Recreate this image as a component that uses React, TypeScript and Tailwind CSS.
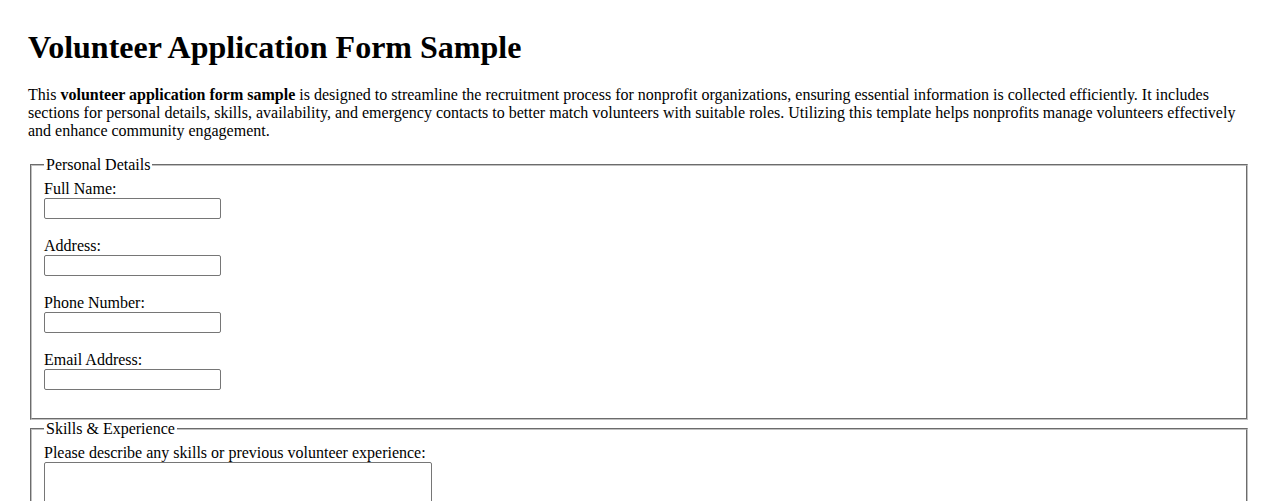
export default function App() {
  const fields = ["Full Name:", "Address:", "Phone Number:", "Email Address:"];
  return (
    <div className="bg-white text-black min-h-screen px-[28px] pt-[29px] text-[16px] leading-[normal] font-['Liberation_Serif','Times_New_Roman',serif]">
      <h1 className="text-[32px] font-bold leading-[normal]">Volunteer Application Form Sample</h1>
      <p className="mt-[20px] mb-[16px]">
        This <strong className="font-bold">volunteer application form sample</strong> is designed to streamline the
        recruitment process for nonprofit organizations, ensuring essential information is collected efficiently. It
        includes sections for personal details, skills, availability, and emergency contacts to better match volunteers
        with suitable roles. Utilizing this template helps nonprofits manage volunteers effectively and enhance
        community engagement.
      </p>
      <form>
        <fieldset className="mx-[2px] border-2 [border-style:groove] border-[#c0c0c0] px-[12px] pt-[6px] pb-[10px]">
          <legend className="px-[2px]">Personal Details</legend>
          {fields.map((f) => (
            <div key={f} className="mb-[18px]">
              <label className="block h-[18px]">{f}</label>
              <input
                type="text"
                className="block w-[177px] h-[21px] border border-[#767676] rounded-[2px] px-[2px] text-[13px] font-['Liberation_Sans',sans-serif]"
              />
            </div>
          ))}
        </fieldset>
        <fieldset className="mx-[2px] border-2 [border-style:groove] border-[#c0c0c0] px-[12px] pt-[6px] pb-[10px]">
          <legend className="px-[2px]">Skills &amp; Experience</legend>
          <label className="block h-[18px]">Please describe any skills or previous volunteer experience:</label>
          <textarea
            rows={4}
            className="block w-[388px] h-[70px] border border-[#767676] rounded-[2px] px-[2px] text-[13px] font-['Liberation_Mono',monospace] resize"
          />
        </fieldset>
      </form>
    </div>
  );
}
